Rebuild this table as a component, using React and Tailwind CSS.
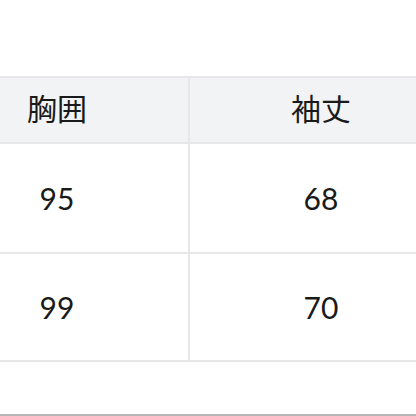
import React from 'react';

const rows = [
  ['95', '68'],
  ['99', '70'],
];

export default function App() {
  const font = { fontFamily: 'Lato, "Noto Sans CJK JP", sans-serif' };
  return (
    <div className="w-[416px] h-[416px] bg-white overflow-hidden flex flex-col" style={font}>
      <div className="pt-[76px]">
        <div className="ml-[-74px] w-[528px] grid grid-cols-[264px_264px] border-t-2 border-[#e7e7e9] text-[30px] text-[#1a1a1a] leading-none">
          {/* header */}
          <div className="h-[66px] pb-[4px] bg-[#f2f3f5] border-r-2 border-b-2 border-[#e7e7e9] flex items-center justify-center">胸囲</div>
          <div className="h-[66px] pb-[4px] bg-[#f2f3f5] border-r-2 border-b-2 border-[#e7e7e9] flex items-center justify-center">袖丈</div>
          {rows.map((r, i) => (
            <React.Fragment key={i}>
              <div className={`${i === 0 ? 'h-[110px]' : 'h-[108px]'} border-r-2 border-b-2 border-[#e7e7e9] flex items-center justify-center`}>{r[0]}</div>
              <div className={`${i === 0 ? 'h-[110px]' : 'h-[108px]'} border-r-2 border-b-2 border-[#e7e7e9] flex items-center justify-center`}>{r[1]}</div>
            </React.Fragment>
          ))}
        </div>
      </div>
      <div className="mt-auto h-[2px] bg-[#b5b5b5]" />
    </div>
  );
}
